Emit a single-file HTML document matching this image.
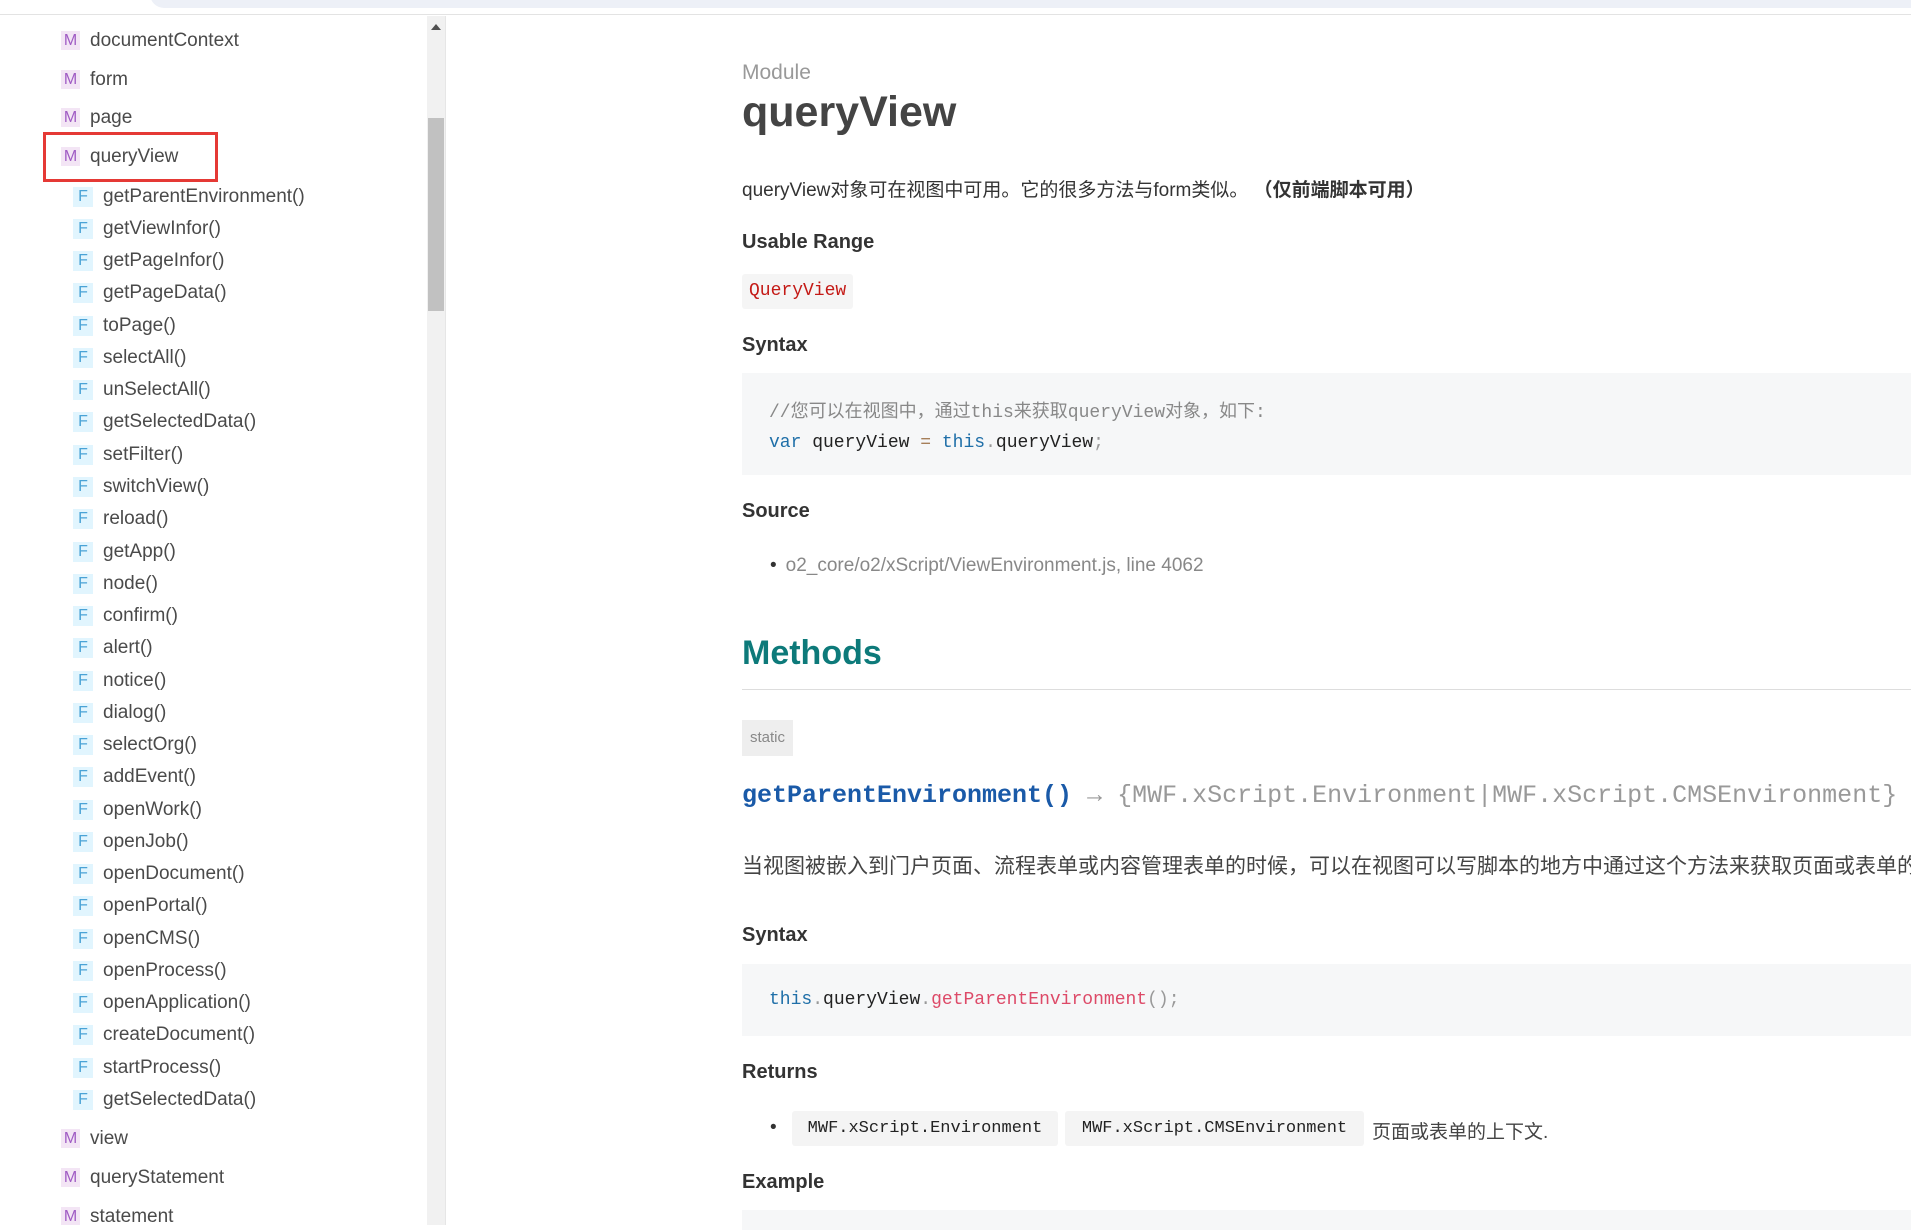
<!DOCTYPE html>
<html><head><meta charset="utf-8"><style>
*{margin:0;padding:0;box-sizing:border-box}
html,body{width:1911px;height:1225px;overflow:hidden;background:#fff;font-family:"Liberation Sans","Noto Sans CJK SC",sans-serif;color:#444}
.top{position:absolute;left:0;top:0;width:1911px;height:15px;border-bottom:1px solid #e3e3e3}
.top .pill{position:absolute;left:150px;top:-20px;width:1800px;height:28px;background:#edf0f7;border-radius:14px}
.side{position:absolute;left:0;top:16px;width:446px;height:1209px;border-right:1px solid #e6e6e6;overflow:hidden}
.sb{position:absolute;left:427px;top:0;width:18px;height:1209px;background:#f1f1f1}
.thumb{position:absolute;left:428px;top:102px;width:16px;height:193px;background:#c1c1c1}
.arr{position:absolute;left:431px;top:8px;width:0;height:0;border-left:5px solid transparent;border-right:5px solid transparent;border-bottom:6px solid #505050}
.it{position:absolute;font-size:19px;color:#4a4a4a;white-space:nowrap;line-height:24px;margin-top:2px}
.ic{display:inline-block;width:19px;height:19px;line-height:19px;text-align:center;font-size:16px;margin-right:10px;vertical-align:1px}
.m .ic{background:#f3e5f5;color:#a05cc4}
.f .ic{background:#e1f5fe;color:#4aa3d6;width:20px;height:20px}
.red{position:absolute;left:43px;top:116px;width:175px;height:50px;border:3px solid #e53935}
.main{position:absolute;left:742px;top:0;width:1169px}
.a{position:absolute;left:0;white-space:nowrap}
h4{position:absolute;left:0;font-size:20px;font-weight:bold;color:#333;white-space:nowrap}
.code{position:absolute;left:0;width:1200px;background:#f6f7f8}
.mono{font-family:"Liberation Mono","Noto Sans CJK SC",monospace}
.chip{position:absolute;background:#f4f4f4;border-radius:3px;font-family:"Liberation Mono",monospace;font-size:17px;color:#222;height:35px;line-height:35px;padding:0 7px;text-align:center}
</style></head><body>
<div class="top"><div class="pill"></div></div>
<div class="side">
<div class="sb"></div><div class="thumb"></div><div class="arr"></div>
<div class="it m" style="left:61px;top:11px"><span class="ic">M</span>documentContext</div>
<div class="it m" style="left:61px;top:50px"><span class="ic">M</span>form</div>
<div class="it m" style="left:61px;top:88px"><span class="ic">M</span>page</div>
<div class="it m" style="left:61px;top:127px"><span class="ic">M</span>queryView</div>
<div class="red"></div>
<div class="it f" style="left:73px;top:167px"><span class="ic">F</span>getParentEnvironment()</div>
<div class="it f" style="left:73px;top:199px"><span class="ic">F</span>getViewInfor()</div>
<div class="it f" style="left:73px;top:231px"><span class="ic">F</span>getPageInfor()</div>
<div class="it f" style="left:73px;top:263px"><span class="ic">F</span>getPageData()</div>
<div class="it f" style="left:73px;top:296px"><span class="ic">F</span>toPage()</div>
<div class="it f" style="left:73px;top:328px"><span class="ic">F</span>selectAll()</div>
<div class="it f" style="left:73px;top:360px"><span class="ic">F</span>unSelectAll()</div>
<div class="it f" style="left:73px;top:392px"><span class="ic">F</span>getSelectedData()</div>
<div class="it f" style="left:73px;top:425px"><span class="ic">F</span>setFilter()</div>
<div class="it f" style="left:73px;top:457px"><span class="ic">F</span>switchView()</div>
<div class="it f" style="left:73px;top:489px"><span class="ic">F</span>reload()</div>
<div class="it f" style="left:73px;top:522px"><span class="ic">F</span>getApp()</div>
<div class="it f" style="left:73px;top:554px"><span class="ic">F</span>node()</div>
<div class="it f" style="left:73px;top:586px"><span class="ic">F</span>confirm()</div>
<div class="it f" style="left:73px;top:618px"><span class="ic">F</span>alert()</div>
<div class="it f" style="left:73px;top:651px"><span class="ic">F</span>notice()</div>
<div class="it f" style="left:73px;top:683px"><span class="ic">F</span>dialog()</div>
<div class="it f" style="left:73px;top:715px"><span class="ic">F</span>selectOrg()</div>
<div class="it f" style="left:73px;top:747px"><span class="ic">F</span>addEvent()</div>
<div class="it f" style="left:73px;top:780px"><span class="ic">F</span>openWork()</div>
<div class="it f" style="left:73px;top:812px"><span class="ic">F</span>openJob()</div>
<div class="it f" style="left:73px;top:844px"><span class="ic">F</span>openDocument()</div>
<div class="it f" style="left:73px;top:876px"><span class="ic">F</span>openPortal()</div>
<div class="it f" style="left:73px;top:909px"><span class="ic">F</span>openCMS()</div>
<div class="it f" style="left:73px;top:941px"><span class="ic">F</span>openProcess()</div>
<div class="it f" style="left:73px;top:973px"><span class="ic">F</span>openApplication()</div>
<div class="it f" style="left:73px;top:1005px"><span class="ic">F</span>createDocument()</div>
<div class="it f" style="left:73px;top:1038px"><span class="ic">F</span>startProcess()</div>
<div class="it f" style="left:73px;top:1070px"><span class="ic">F</span>getSelectedData()</div>
<div class="it m" style="left:61px;top:1109px"><span class="ic">M</span>view</div>
<div class="it m" style="left:61px;top:1148px"><span class="ic">M</span>queryStatement</div>
<div class="it m" style="left:61px;top:1187px"><span class="ic">M</span>statement</div>
</div>
<div class="main">
<div class="a" style="top:61px;font-size:21px;color:#999">Module</div>
<div class="a" style="top:88px;font-size:43px;font-weight:bold;color:#444">queryView</div>
<div class="a" style="top:175px;font-size:19px;color:#333">queryView对象可在视图中可用。它的很多方法与form类似。 <b>（仅前端脚本可用）</b></div>
<h4 style="top:231px">Usable Range</h4>
<div class="a mono" style="top:274px;height:35px;line-height:35px;padding:0 7px;background:#f5f5f5;border-radius:3px;font-size:18px;color:#c41a16">QueryView</div>
<h4 style="top:334px">Syntax</h4>
<div class="code mono" style="top:373px;height:102px;padding:25px 27px;font-size:18px;line-height:30px;color:#222">
<div style="color:#888">//您可以在视图中，通过this来获取queryView对象，如下:</div>
<div><span style="color:#1f6fa8">var</span> queryView <span style="color:#a67f59">=</span> <span style="color:#1f6fa8">this</span><span style="color:#999">.</span>queryView<span style="color:#999">;</span></div></div>
<h4 style="top:500px">Source</h4>
<div class="a" style="top:555px;font-size:19px;color:#888"><span style="color:#333;margin:0 9px 0 28px">•</span>o2_core/o2/xScript/ViewEnvironment.js, line 4062</div>
<div class="a" style="top:634px;font-size:34px;font-weight:bold;color:#0d7a7a">Methods</div>
<div style="position:absolute;left:0;top:689px;width:1200px;height:1px;background:#ddd"></div>
<div class="a" style="top:720px;width:51px;height:36px;line-height:36px;text-align:center;background:#eee;font-size:15px;color:#888">static</div>
<div class="a mono" style="top:781px;font-size:25px;color:#999"><b style="color:#1a5aa8">getParentEnvironment()</b> → {MWF.xScript.Environment|MWF.xScript.CMSEnvironment}</div>
<div class="a" style="top:850px;font-size:21px;color:#444">当视图被嵌入到门户页面、流程表单或内容管理表单的时候，可以在视图可以写脚本的地方中通过这个方法来获取页面或表单的上下文</div>
<h4 style="top:924px">Syntax</h4>
<div class="code mono" style="top:964px;height:72px;padding:0 27px;line-height:72px;font-size:18px;color:#222"><span style="color:#1f6fa8">this</span><span style="color:#999">.</span>queryView<span style="color:#999">.</span><span style="color:#dd4a68">getParentEnvironment</span><span style="color:#999">();</span></div>
<h4 style="top:1061px">Returns</h4>
<div class="a" style="top:1117px;font-size:19px;color:#333;left:28px">•</div>
<div class="chip" style="left:50px;top:1111px;width:266px">MWF.xScript.Environment</div>
<div class="chip" style="left:323px;top:1111px;width:299px">MWF.xScript.CMSEnvironment</div>
<div class="a" style="left:630px;top:1117px;font-size:19px;color:#444">页面或表单的上下文.</div>
<h4 style="top:1171px">Example</h4>
<div class="code" style="top:1210px;height:20px"></div>
</div>
</body></html>
